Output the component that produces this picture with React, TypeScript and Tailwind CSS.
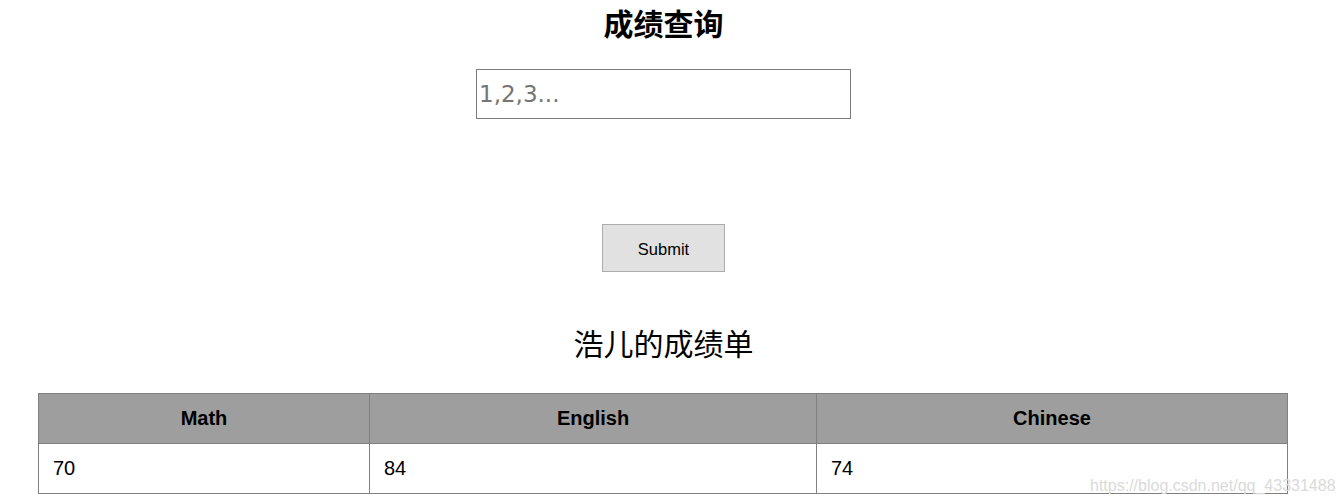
import React from "react";

export default function App() {
  return (
    <div className="relative w-[1342px] h-[504px] bg-white overflow-hidden text-black">
      <div className="w-[1327px] flex flex-col items-center pt-[7px]">
        <h1 className="text-[30px] leading-[36px] font-bold [font-family:'Liberation_Sans','Noto_Sans_CJK_SC',sans-serif]">
          成绩查询
        </h1>
        <input
          className="mt-[26px] w-[375px] h-[50px] border border-[#7a7a7a] px-[2px] text-[23px] outline-none placeholder:text-[#757575] [font-family:'DejaVu_Sans',sans-serif]"
          placeholder="1,2,3..."
        />
        <button className="mt-[105px] w-[123px] h-[48px] bg-[#e1e1e1] border border-[#adadad] pt-[2px] text-[16.5px] [font-family:'Liberation_Sans',sans-serif]">
          Submit
        </button>
        <h2 className="mt-[55px] text-[30px] leading-[36px] font-normal [font-family:'Liberation_Sans','Noto_Sans_CJK_SC',sans-serif]">
          浩儿的成绩单
        </h2>
        <div className="self-start ml-[38px] mt-[30px]">
          <table className="w-[1250px] border-collapse text-[20px] [font-family:'Liberation_Sans',sans-serif]">
            <thead>
              <tr className="h-[50px] bg-[#9e9e9e]">
                <th className="w-[331px] border border-[#808080] font-bold text-center pb-[1px]">Math</th>
                <th className="w-[447px] border border-[#808080] font-bold text-center pb-[1px]">English</th>
                <th className="border border-[#808080] font-bold text-center pb-[1px]">Chinese</th>
              </tr>
            </thead>
            <tbody>
              <tr className="h-[50px]">
                <td className="border border-[#808080] pl-[14px] pb-[1px]">70</td>
                <td className="border border-[#808080] pl-[14px] pb-[1px]">84</td>
                <td className="border border-[#808080] pl-[14px] pb-[1px]">74</td>
              </tr>
            </tbody>
          </table>
        </div>
      </div>
      <div className="absolute left-[1090px] top-[476px] text-[16px] leading-[20px] text-[#dadada] [font-family:'Liberation_Sans',sans-serif] whitespace-nowrap">
        https://blog.csdn.net/qq_43331488
      </div>
    </div>
  );
}
